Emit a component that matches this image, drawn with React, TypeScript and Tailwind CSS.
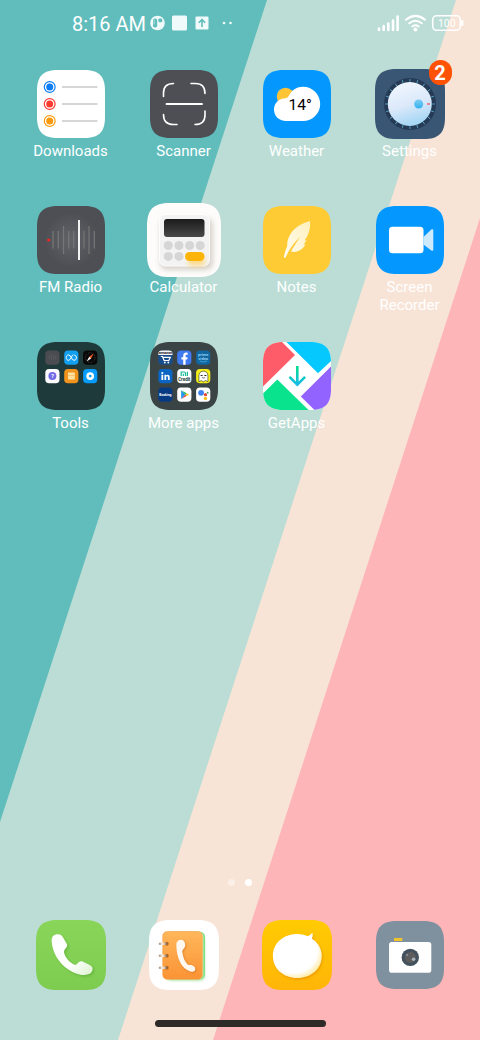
import type { ReactNode } from "react";

const SQUIRCLE =
  "M21 0H47C62 0 68 6 68 21V47C68 62 62 68 47 68H21C6 68 0 62 0 47V21C0 6 6 0 21 0Z";

function Tile({ fill, children }: { fill: string; children?: ReactNode }) {
  return (
    <svg viewBox="0 0 68 68" className="size-[68px] overflow-visible" aria-hidden="true">
      <path d={SQUIRCLE} fill={fill} />
      {children}
    </svg>
  );
}

function LargeTile({ fill, children }: { fill: string; children?: ReactNode }) {
  return (
    <svg viewBox="0 0 70 70" className="size-[70px] overflow-visible" aria-hidden="true">
      <path d={SQUIRCLE} fill={fill} transform="scale(1.0294)" />
      {children}
    </svg>
  );
}

function DownloadsIcon() {
  const rows = [
    { y: 17, color: "#0a7cf5" },
    { y: 34, color: "#fc3b30" },
    { y: 51, color: "#fd9a0c" },
  ];
  return (
    <Tile fill="#ffffff">
      {rows.map((r) => (
        <g key={r.y}>
          <circle cx="12.7" cy={r.y} r="5.4" fill="none" stroke={r.color} strokeWidth="1.2" />
          <circle cx="12.7" cy={r.y} r="3.5" fill={r.color} />
          <path d={`M25 ${r.y}H60.5`} stroke="#c9c9cb" strokeWidth="1.3" />
        </g>
      ))}
    </Tile>
  );
}

function ScannerIcon() {
  return (
    <Tile fill="#4e4f55">
      <g fill="none" stroke="#ffffff" strokeWidth="1.6" strokeLinecap="round">
        <path d="M13.5 26.5V23Q13.5 13.5 23.5 13.5" />
        <path d="M41 13.5H45.5Q55 13.5 55 23.5" />
        <path d="M13.5 44.5Q13.5 54.5 23 54.5H27" />
        <path d="M55 41V45Q55 54.5 45 54.5" />
        <path d="M16.5 34H52" strokeWidth="1.9" />
      </g>
    </Tile>
  );
}

function WeatherIcon() {
  return (
    <Tile fill="#0498ff">
      <circle cx="22.5" cy="26.5" r="8.7" fill="#fdc436" />
      <path
        d="M23 51C16 51 11 46 11 39.5C11 33 16 28.5 22 28.2C24 28 25 27.5 26 25.5C29 20 34 16.8 40 16.8C49.5 16.8 57.2 24.5 57.2 34C57.2 43.5 49.5 51 40 51Z"
        fill="#ffffff"
      />
      <text x="25.5" y="39.5" fontSize="15.5" fill="#000000" fontFamily="Roboto, sans-serif">
        14°
      </text>
    </Tile>
  );
}

function SettingsIcon() {
  const ticks = Array.from({ length: 20 }, (_, i) => i * 18);
  return (
    <LargeTile fill="#3a5675">
      <defs>
        <linearGradient id="knob" x1="0" y1="0" x2="0.3" y2="1">
          <stop offset="0" stopColor="#f3f8ff" />
          <stop offset="0.6" stopColor="#dce9fa" />
          <stop offset="1" stopColor="#a9d8f5" />
        </linearGradient>
        <linearGradient id="knobDot" x1="0" y1="0" x2="0" y2="1">
          <stop offset="0" stopColor="#7ccdf2" />
          <stop offset="1" stopColor="#35b3f0" />
        </linearGradient>
      </defs>
      <circle cx="35" cy="35" r="26" fill="#253a55" />
      {ticks.map((a) => (
        <path key={a} d="M35 10V12.8" stroke="#5ea7c9" strokeWidth="0.9" transform={`rotate(${a} 35 35)`} />
      ))}
      <circle cx="34.8" cy="35" r="22" fill="url(#knob)" />
      <circle cx="43.7" cy="35" r="4.5" fill="url(#knobDot)" />
      <path d="M52 35H55" stroke="#ec6f80" strokeWidth="1.6" />
    </LargeTile>
  );
}

function RadioIcon() {
  const bars = [
    [16, 25, 42.5],
    [21.3, 25, 42.5],
    [26.5, 20, 48],
    [31.7, 25, 42.5],
    [36.7, 25, 42.5],
    [47, 25, 42.5],
    [52, 20, 48],
    [57.3, 25, 42.5],
  ];
  return (
    <Tile fill="url(#radioBg)">
      <defs>
        <radialGradient id="radioBg">
          <stop offset="0" stopColor="#626368" />
          <stop offset="0.8" stopColor="#4e4f54" />
        </radialGradient>
      </defs>
      {bars.map(([x, a, b]) => (
        <path key={x} d={`M${x} ${a}V${b}`} stroke="#747576" strokeWidth="1.3" />
      ))}
      <circle cx="11.7" cy="34" r="1.6" fill="#f0262c" />
      <path d="M42 14V54" stroke="#f2f2f2" strokeWidth="2" />
    </Tile>
  );
}

function CalculatorIcon() {
  return (
    <svg viewBox="0 0 74 74" className="size-[74px]" aria-hidden="true">
      <defs>
        <linearGradient id="calcScreen" x1="0" y1="0" x2="0" y2="1">
          <stop offset="0" stopColor="#1b1b1b" />
          <stop offset="1" stopColor="#484848" />
        </linearGradient>
        <filter id="calcBlur" x="-50%" y="-50%" width="200%" height="200%">
          <feGaussianBlur stdDeviation="2.5" />
        </filter>
      </defs>
      <path d={SQUIRCLE} fill="#fdfcfa" transform="scale(1.0882)" />
      <rect x="13" y="15" width="53" height="52" rx="7" fill="#c9c2bb" opacity="0.7" filter="url(#calcBlur)" />
      <rect x="12.5" y="11.5" width="50" height="51.5" rx="6" fill="#f3f3f3" stroke="#ffffff" strokeWidth="0.8" />
      <rect x="17" y="16" width="40.5" height="18" rx="3" fill="url(#calcScreen)" />
      {[21.3, 32, 42.6, 53.2].map((x) => (
        <circle key={x} cx={x} cy="42.5" r="4.5" fill="#d6d6d6" />
      ))}
      <circle cx="21.3" cy="53.4" r="4.5" fill="#d6d6d6" />
      <circle cx="32" cy="53.4" r="4.5" fill="#d6d6d6" />
      <rect x="41" y="54" width="17" height="9" rx="4" fill="#ffd060" opacity="0.7" filter="url(#calcBlur)" />
      <rect x="38" y="49" width="19.5" height="9" rx="4.5" fill="#fdb408" />
    </svg>
  );
}

function NotesIcon() {
  return (
    <Tile fill="#ffcb35">
      <defs>
        <linearGradient id="quill" x1="1" y1="0" x2="0" y2="1">
          <stop offset="0" stopColor="#fff0bc" />
          <stop offset="1" stopColor="#fffdf4" />
        </linearGradient>
      </defs>
      <path
        d="M47 15C39 17 31 22 27.5 28C25 32 24 36 24.3 40C22.5 44 21.5 48 20.8 51.5L22.3 51.8C26 44 31 36 37.5 30.5C33.5 36 30.5 41 28 45.5C34 47.5 40 43 42.5 38.5L40.5 38.5L43.5 34.5L41.5 34.3C45 30.5 47.8 23 47 15Z"
        fill="url(#quill)"
      />
    </Tile>
  );
}

function RecorderIcon() {
  return (
    <Tile fill="#0498ff">
      <path
        d="M47.5 31L55.3 23.6C56.2 22.8 57.3 23.2 57.3 24.5V43.5C57.3 44.8 56.2 45.2 55.3 44.4L47.5 38.5Z"
        fill="#cdeafd"
      />
      <rect x="13" y="20.7" width="34.5" height="26.6" rx="3.5" fill="#ffffff" />
    </Tile>
  );
}

function Mini({ col, row, fill, children }: { col: number; row: number; fill: string; children?: ReactNode }) {
  return (
    <g transform={`translate(${8.3 + col * 18.9} ${8.5 + row * 18.5})`}>
      <rect width="14.2" height="14.2" rx="3.8" fill={fill} />
      {children}
    </g>
  );
}

function ToolsIcon() {
  return (
    <Tile fill="#1f3a3a">
      <Mini col={0} row={0} fill="#4b4c51">
        <path d="M4 5V9M6 4V10M8.5 4V10M10.5 5V9" stroke="#5f6064" strokeWidth="0.7" />
      </Mini>
      <Mini col={1} row={0} fill="#129ff0">
        <path
          d="M9.2 4.2C7.5 4.2 6.8 9.8 4.4 9.8C1.2 9.8 1.2 4.4 4.4 4.4C7 4.4 7.2 9.8 9.8 9.8C13 9.8 13 4.8 10 4.6"
          fill="none"
          stroke="#ffffff"
          strokeWidth="1"
        />
      </Mini>
      <Mini col={2} row={0} fill="#080808">
        <circle cx="7.1" cy="7.1" r="4.8" fill="none" stroke="#777777" strokeWidth="0.7" strokeDasharray="0.6 1.2" />
        <path d="M10.5 3L8 8L6.2 6.2Z" fill="#fb5a22" />
        <path d="M3.5 11L8 8L6.2 6.2Z" fill="#ffffff" />
      </Mini>
      <Mini col={0} row={1} fill="#fbfaff">
        <circle cx="7.1" cy="7.1" r="4" fill="#7169e6" />
        <text x="7.1" y="9.3" fontSize="6" fontWeight="700" textAnchor="middle" fill="#ffffff" fontFamily="Roboto, sans-serif">
          ?
        </text>
      </Mini>
      <Mini col={1} row={1} fill="#f1941e">
        <rect x="3.8" y="3.5" width="6.8" height="7" rx="0.6" fill="#ffe2a0" />
        <path d="M3.8 6.5H10.6" stroke="#f4bd62" strokeWidth="0.7" />
      </Mini>
      <Mini col={2} row={1} fill="#079bfa">
        <circle cx="7.1" cy="7.1" r="3.9" fill="#ffffff" />
        <circle cx="7.1" cy="7.1" r="1.4" fill="#079bfa" />
      </Mini>
    </Tile>
  );
}

function MoreAppsIcon() {
  const font = "Roboto, sans-serif";
  return (
    <Tile fill="#3b4444">
      <Mini col={0} row={0} fill="#174d8c">
        <path d="M0 4.5V3.5C0 1 1.2 0 3.8 0H10.4C13 0 14.2 1 14.2 3.5V4.5Z" fill="#f7f7f7" />
        <text x="7.1" y="3.8" fontSize="3.8" fontWeight="700" textAnchor="middle" fill="#222222" fontFamily={font}>
          amazon
        </text>
        <path d="M2.5 6H4.2L5.8 10H10.5L12 6.8H4.7" fill="none" stroke="#ffffff" strokeWidth="1.2" />
        <circle cx="6.5" cy="12" r="0.9" fill="#ffffff" />
        <circle cx="10" cy="12" r="0.9" fill="#ffffff" />
      </Mini>
      <Mini col={1} row={0} fill="#3f7af0">
        <path
          d="M6 14.2V9H4.2V6.7H6V5.2C6 3.1 7.2 2.1 9 2.1L10.5 2.2V4.2H9.5C8.7 4.2 8.4 4.6 8.4 5.3V6.7H10.4L10 9H8.4V14.2Z"
          fill="#ffffff"
        />
      </Mini>
      <Mini col={2} row={0} fill="#12659e">
        <text x="7.1" y="5.8" fontSize="4" fontWeight="700" textAnchor="middle" fill="#8fd2f5" fontFamily={font}>
          prime
        </text>
        <text x="7.1" y="9.2" fontSize="4" fontWeight="700" textAnchor="middle" fill="#8fd2f5" fontFamily={font}>
          video
        </text>
        <path d="M3.5 10.5Q7.2 12.5 11 10.5" fill="none" stroke="#45b9ed" strokeWidth="0.7" />
      </Mini>
      <Mini col={0} row={1} fill="#0a66c2">
        <circle cx="4" cy="4" r="1.1" fill="#ffffff" />
        <path d="M3.1 5.8H4.9V11H3.1ZM6.1 5.8H7.8V6.5C8.9 5 11.4 5.5 11.4 8V11H9.6V8.3C9.6 6.7 7.9 6.9 7.9 8.3V11H6.1Z" fill="#ffffff" />
      </Mini>
      <Mini col={1} row={1} fill="#ffffff">
        <path d="M4 7V3H6.8Q8.3 3 8.3 4.5V7M6.1 4.8V7M10.2 2.8V7" fill="none" stroke="#14b998" strokeWidth="1.2" />
        <text x="7.1" y="11.8" fontSize="4.5" fontWeight="700" textAnchor="middle" fill="#153f39" fontFamily={font}>
          Credit
        </text>
      </Mini>
      <Mini col={2} row={1} fill="#f4ee19">
        <path d="M2.8 12.8V6.5C2.8 0.7 11.8 0.7 11.8 6.5V12.8L9.5 11.6L7.3 12.8L5 11.6Z" fill="#ffffff" stroke="#2b2d22" strokeWidth="0.6" />
        <path d="M4.5 6.5H6.5M8.3 6.5H10.3" stroke="#282828" strokeWidth="1" />
        <path d="M5.8 8.5Q7.5 9.6 9 8.5" fill="none" stroke="#282828" strokeWidth="0.6" />
      </Mini>
      <Mini col={0} row={2} fill="#063b83">
        <text x="7.1" y="8.2" fontSize="3.3" fontWeight="700" textAnchor="middle" fill="#ffffff" fontFamily={font}>
          Booking
        </text>
      </Mini>
      <Mini col={1} row={2} fill="#ffffff">
        <path d="M4 2.8V11.6L8.2 7.2Z" fill="#2296ee" />
        <path d="M4 2.8L9.5 5.8L8.2 7.2Z" fill="#21b763" />
        <path d="M4 11.6L9.5 8.6L8.2 7.2Z" fill="#ef453b" />
        <path d="M9.5 5.8L12 7.2L9.5 8.6L8.2 7.2Z" fill="#fcc21b" />
      </Mini>
      <Mini col={2} row={2} fill="#ffffff">
        <circle cx="5" cy="5.3" r="2.9" fill="#3f82f1" />
        <circle cx="9.4" cy="7.2" r="1.6" fill="#e84436" />
        <circle cx="9.4" cy="10.9" r="1.7" fill="#f8bd16" />
        <circle cx="11.6" cy="5.2" r="0.9" fill="#36a657" />
      </Mini>
    </Tile>
  );
}

function GetAppsIcon() {
  return (
    <Tile fill="#ffffff">
      <defs>
        <clipPath id="getAppsClip">
          <path d={SQUIRCLE} />
        </clipPath>
        <linearGradient id="getAppsArrow" gradientUnits="userSpaceOnUse" x1="0" y1="24" x2="0" y2="44">
          <stop offset="0" stopColor="#08df8c" />
          <stop offset="1" stopColor="#17b9ee" />
        </linearGradient>
      </defs>
      <g clipPath="url(#getAppsClip)">
        <path d="M0 0H19L32 13L0 44.5Z" fill="#ff5c6a" />
        <path d="M23.5 0L55 31.3L68 19V0Z" fill="#05c8ff" />
        <path d="M68 24.5L37.8 54.5L51.5 68H68Z" fill="#9263ff" />
        <path d="M14.3 37.5L0 51.5V68H45.5Z" fill="#09e38d" />
      </g>
      <path d="M34.3 24V43M26.5 34.8L34.3 42.6L42.1 34.8" fill="none" stroke="url(#getAppsArrow)" strokeWidth="2.6" />
    </Tile>
  );
}

const HANDSET =
  "M15.7 21C15.4 17 17.5 14.6 21 14.2C24.3 13.8 26.2 15.3 27.4 18L31 24.3C32 27.5 28.3 28.5 28 32C28.8 37.5 33.5 42.5 38.5 44.7C41.5 45.5 42 40.6 46 41.3L53.8 45.1C57 47 57.3 49.5 55.7 52C53.5 54.8 49 55.5 44.5 54.8C29 51.5 16.2 36.5 15.7 21Z";

const BOOK_HANDSET =
  "M27.3 25C27.2 21.5 29 20 31.5 19.7C34.2 19.5 36.2 21.5 36.2 25C36.2 28.5 33 29 33.3 32C34 37.5 36 42 38.7 44.5C40.5 46 41.5 44 44.2 45.8C46.5 47.5 47 49.5 45.5 51C43.5 52.5 39.5 51.5 36 48.5C30 43.5 27.5 34 27.3 25Z";

function PhoneIcon() {
  return (
    <LargeTile fill="url(#phoneBg)">
      <defs>
        <linearGradient id="phoneBg" x1="0" y1="0" x2="0" y2="1">
          <stop offset="0" stopColor="#89d55a" />
          <stop offset="1" stopColor="#7dcc50" />
        </linearGradient>
        <linearGradient id="phoneFill" x1="0" y1="0" x2="1" y2="1">
          <stop offset="0.6" stopColor="#ffffff" />
          <stop offset="1" stopColor="#dcf2cf" />
        </linearGradient>
        <filter id="phoneShadow" x="-50%" y="-50%" width="200%" height="200%">
          <feGaussianBlur stdDeviation="1.3" />
        </filter>
      </defs>
      <path d={HANDSET} fill="#4b9c2c" opacity="0.45" transform="translate(1.5 1.5)" filter="url(#phoneShadow)" />
      <path d={HANDSET} fill="url(#phoneFill)" />
    </LargeTile>
  );
}

function ContactsIcon() {
  return (
    <LargeTile fill="#ffffff">
      <defs>
        <linearGradient id="book" x1="0" y1="0" x2="0" y2="1">
          <stop offset="0" stopColor="#ffb75a" />
          <stop offset="1" stopColor="#fa9335" />
        </linearGradient>
        <linearGradient id="ring" x1="0" y1="0" x2="1" y2="0">
          <stop offset="0" stopColor="#a58d78" />
          <stop offset="0.45" stopColor="#fff4e6" />
          <stop offset="1" stopColor="#77502f" />
        </linearGradient>
        <filter id="bookShadow" x="-50%" y="-50%" width="200%" height="200%">
          <feGaussianBlur stdDeviation="1" />
        </filter>
      </defs>
      <rect x="17" y="15" width="39" height="46" rx="5" fill="#8ddc84" opacity="0.6" filter="url(#bookShadow)" />
      <rect x="18" y="11.8" width="38" height="47.5" rx="5" fill="#83df86" />
      <rect x="17" y="11.5" width="37.3" height="47.8" rx="5" fill="#d8f0bb" />
      <rect x="13.7" y="11.5" width="39.6" height="47.8" rx="4.5" fill="url(#book)" stroke="#f59636" strokeWidth="0.5" />
      {[23.7, 35.7, 47.7].map((y) => (
        <g key={y}>
          <circle cx="17.8" cy={y} r="2" fill="#c16b22" />
          <rect x="9.7" y={y - 1.3} width="9" height="2.6" rx="1.3" fill="url(#ring)" />
        </g>
      ))}
      <path d={BOOK_HANDSET} fill="#b5560e" opacity="0.4" transform="translate(1 1)" filter="url(#bookShadow)" />
      <path d={BOOK_HANDSET} fill="#fff8f0" />
    </LargeTile>
  );
}

function MessagesIcon() {
  const bubble =
    "M35.3 14C40 14 43.5 15.2 46 16.3C47.5 15.5 49 14 50.4 12.8C51 14.8 50.7 17 49.9 18.8C56 22.5 59.8 29 59.8 36C59.8 48.5 49.5 58 35.3 58C21 58 10.9 48.5 10.9 36C10.9 23.5 21 14 35.3 14Z";
  return (
    <LargeTile fill="url(#msgBg)">
      <defs>
        <linearGradient id="msgBg" x1="0" y1="0" x2="0" y2="1">
          <stop offset="0" stopColor="#ffcb02" />
          <stop offset="1" stopColor="#ffb507" />
        </linearGradient>
        <radialGradient id="bubble" cx="0.42" cy="0.4" r="0.62">
          <stop offset="0.78" stopColor="#ffffff" />
          <stop offset="1" stopColor="#ffecaa" />
        </radialGradient>
        <filter id="msgShadow" x="-50%" y="-50%" width="200%" height="200%">
          <feGaussianBlur stdDeviation="1.3" />
        </filter>
      </defs>
      <path d={bubble} fill="#e08900" opacity="0.6" transform="translate(1 1.5)" filter="url(#msgShadow)" />
      <path d={bubble} fill="url(#bubble)" />
    </LargeTile>
  );
}

function CameraIcon() {
  return (
    <Tile fill="#7f909e">
      <rect x="18" y="17" width="8.3" height="3" fill="#f0c42f" />
      <rect x="13" y="21" width="42.3" height="30.7" rx="2.8" fill="#ffffff" />
      <circle cx="34.3" cy="36.4" r="8.7" fill="#42515d" />
      <circle cx="34.3" cy="36.4" r="5.6" fill="#5c5c5d" />
      <circle cx="37.6" cy="38.3" r="1.8" fill="#a9b3bd" />
      <circle cx="31.2" cy="34" r="1.1" fill="#89939c" />
    </Tile>
  );
}

interface AppEntry {
  name: string;
  icon: ReactNode;
  badge?: number;
}

const apps: AppEntry[] = [
  { name: "Downloads", icon: <DownloadsIcon /> },
  { name: "Scanner", icon: <ScannerIcon /> },
  { name: "Weather", icon: <WeatherIcon /> },
  { name: "Settings", icon: <SettingsIcon />, badge: 2 },
  { name: "FM Radio", icon: <RadioIcon /> },
  { name: "Calculator", icon: <CalculatorIcon /> },
  { name: "Notes", icon: <NotesIcon /> },
  { name: "Screen Recorder", icon: <RecorderIcon /> },
  { name: "Tools", icon: <ToolsIcon /> },
  { name: "More apps", icon: <MoreAppsIcon /> },
  { name: "GetApps", icon: <GetAppsIcon /> },
];

const dock: AppEntry[] = [
  { name: "Phone", icon: <PhoneIcon /> },
  { name: "Contacts", icon: <ContactsIcon /> },
  { name: "Messages", icon: <MessagesIcon /> },
  { name: "Camera", icon: <CameraIcon /> },
];

function AppButton({ name, icon, badge }: AppEntry) {
  return (
    <button type="button" className="flex h-[136px] flex-col items-center">
      <span className="relative flex h-[74px] items-center justify-center">
        {icon}
        {badge !== undefined && (
          <span className="absolute -top-[7px] -right-[7px] flex h-[25px] w-[23px] items-center justify-center rounded-full bg-[#ff5205] text-[20px] leading-none font-bold">
            {badge}
          </span>
        )}
      </span>
      <span className="mt-px w-20 text-center text-[15px] leading-[18px]">{name}</span>
    </button>
  );
}

function Wallpaper() {
  return (
    <svg
      viewBox="0 0 480 1040"
      preserveAspectRatio="none"
      className="absolute inset-0 -z-10 size-full"
      aria-hidden="true"
    >
      <rect width="480" height="1040" fill="#fdb5b8" />
      <path d="M0 0H480V218L213 1040H0Z" fill="#f8e4d7" />
      <path d="M0 0H456L118 1040H0Z" fill="#bbddd5" />
      <path d="M0 0H267L0 822Z" fill="#60bdbc" />
    </svg>
  );
}

function StatusBar() {
  return (
    <header className="flex h-[46px] items-center justify-between pr-4 pl-[72px]">
      <div className="flex items-center">
        <time className="pt-0.5 text-[20px] leading-6 whitespace-nowrap">8:16 AM</time>
        <svg viewBox="0 0 84 16" className="ml-1 h-4 w-[84px]" fill="#f0fafa" aria-hidden="true">
          <circle cx="7.5" cy="8" r="7.3" />
          <rect x="3" y="3.6" width="4.2" height="9" rx="1.8" fill="#60bdbc" />
          <rect x="8.4" y="3.6" width="3.8" height="3.6" rx="1" fill="#60bdbc" />
          <path d="M4.2 4.5V9.5" stroke="#c4e6e5" strokeWidth="0.8" />
          <rect x="22" y="0.5" width="15" height="15" rx="1.5" />
          <rect x="45.5" y="1.5" width="13" height="13" rx="1" />
          <path d="M52 12V5M48.8 7.8L52 4.6L55.2 7.8" fill="none" stroke="#60bdbc" strokeWidth="1.6" />
          <circle cx="74" cy="8" r="1.3" />
          <circle cx="80.5" cy="8" r="1.3" />
        </svg>
      </div>
      <svg viewBox="0 0 88 20" className="h-5 w-[88px]" fill="none" stroke="#ffffff" aria-hidden="true">
        <path d="M3 17V15.5M7.7 17V13M12.3 17V10.500M17 17V7.500M21.600 17V3.500" strokeWidth="2.6" strokeLinecap="round" />
        <path d="M30 6.8Q39.5 -1 49 6.8M33.3 10.3Q39.5 5.3 45.7 10.3M36.3 13.5Q39.5 11.2 42.7 13.5" strokeWidth="2" strokeLinecap="round" />
        <circle cx="39.5" cy="16.4" r="2" fill="#ffffff" stroke="none" />
        <rect x="56.7" y="2.8" width="27.6" height="14.5" rx="4" strokeWidth="1.6" />
        <path d="M86.3 8V12" strokeWidth="2.2" strokeLinecap="round" />
        <text x="70.8" y="13.8" fontSize="10.5" textAnchor="middle" fill="#ffffff" stroke="none" fontFamily="Roboto, sans-serif">
          100
        </text>
      </svg>
    </header>
  );
}

export default function App() {
  return (
    <div className="relative isolate flex min-h-screen flex-col overflow-hidden font-['Roboto',sans-serif] text-white">
      <Wallpaper />
      <StatusBar />
      <main className="grid grow grid-cols-4 content-start px-3.5 pt-[21px]">
        {apps.map((app) => (
          <AppButton key={app.name} {...app} />
        ))}
      </main>
      <div className="flex justify-center gap-2.5 pb-[34px]">
        <span className="size-[7px] rounded-full bg-white/40" />
        <span className="size-[7px] rounded-full bg-white" />
      </div>
      <nav aria-label="Dock" className="grid grid-cols-4 px-3.5">
        {dock.map((app) => (
          <button key={app.name} type="button" aria-label={app.name} className="flex h-[70px] items-center justify-center">
            {app.icon}
          </button>
        ))}
      </nav>
      <div className="flex justify-center pt-[30px] pb-[13px]">
        <span className="h-[7px] w-[171px] rounded-full bg-[#2d2a27]" />
      </div>
    </div>
  );
}
